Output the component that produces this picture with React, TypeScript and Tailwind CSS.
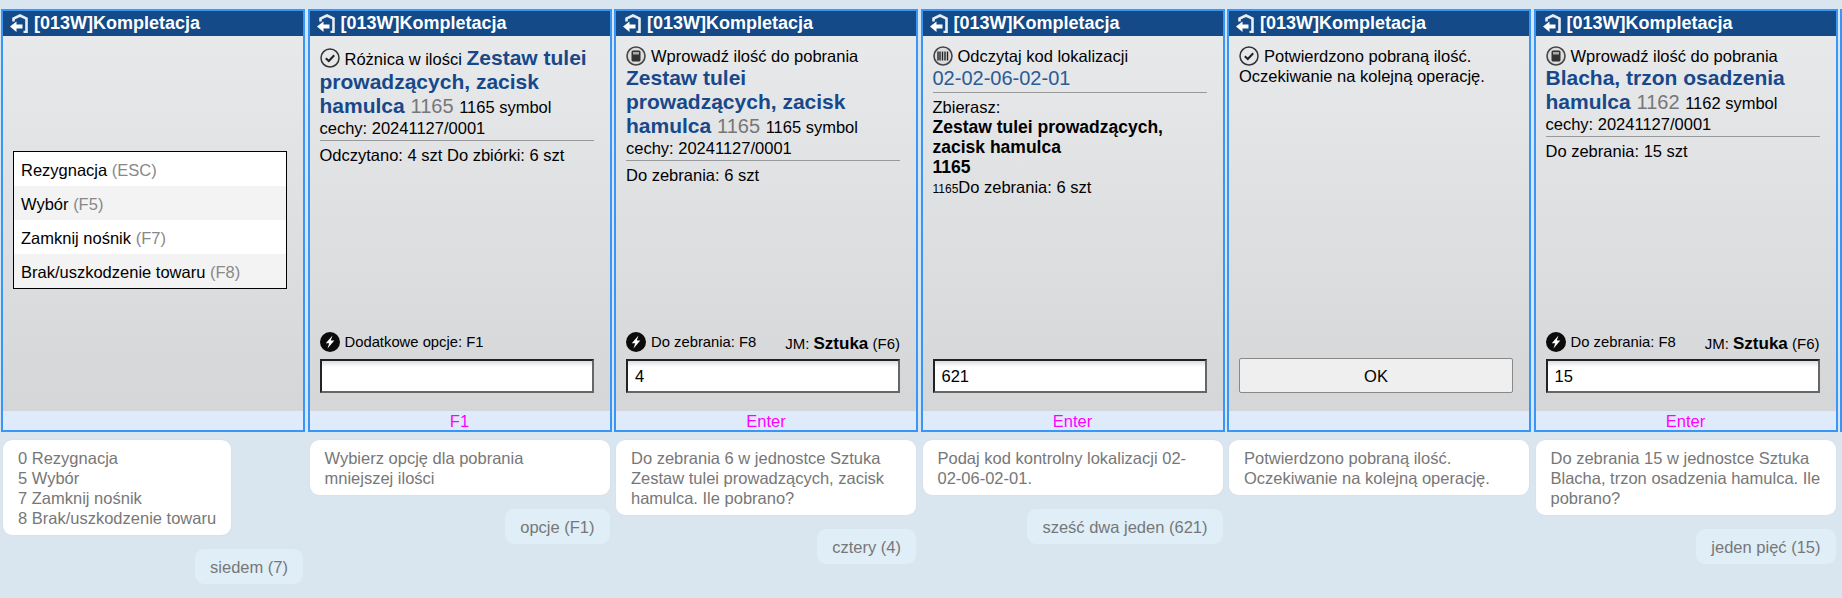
const FONT = "font-['Liberation_Sans',Arial,sans-serif]";

function BackIcon() {
  return (
    <svg width="19" height="19" viewBox="0 0 19 19" className="shrink-0">
      <path d="M3.5 7.5V4.5L10 1.5L16.5 4.5V18H13.5" fill="none" stroke="#fff" strokeWidth="2.6" opacity="0.9" />
      <path d="M0 12.5L6.5 7.5V10.5H12.5V14.5H6.5V18Z" fill="#fff" />
    </svg>
  );
}

function CheckIcon() {
  return (
    <svg width="20" height="20" viewBox="0 0 20 20" className="shrink-0">
      <circle cx="10" cy="10" r="9" fill="none" stroke="#333" strokeWidth="1.5" />
      <path d="M5.8 10.2L8.8 13L14.2 7.2" fill="none" stroke="#222" strokeWidth="2" />
    </svg>
  );
}

function CalcIcon() {
  return (
    <svg width="20" height="20" viewBox="0 0 20 20" className="shrink-0">
      <circle cx="10" cy="10" r="9" fill="#ddd" stroke="#444" strokeWidth="1.6" />
      <rect x="5.5" y="4.5" width="9" height="11" rx="1.5" fill="#333" />
      <rect x="7" y="6" width="6" height="2.5" fill="#aaa" />
    </svg>
  );
}

function BarcodeIcon() {
  return (
    <svg width="20" height="20" viewBox="0 0 20 20" className="shrink-0">
      <circle cx="10" cy="10" r="9" fill="#ddd" stroke="#444" strokeWidth="1.6" />
      <path d="M5 5.5V14.5M7 5.5V14.5M9.5 5.5V14.5M12 5.5V14.5M14.5 5.5V14.5" stroke="#222" strokeWidth="1.4" />
    </svg>
  );
}

function BoltIcon() {
  return (
    <svg width="20" height="20" viewBox="0 0 20 20" className="shrink-0">
      <circle cx="10" cy="10" r="10" fill="#0b0b0b" />
      <path d="M12.5 3.5L5.8 11.2H9.2L7.5 16.5L14.3 8.6H10.8Z" fill="#fff" />
    </svg>
  );
}

function Title({ text, code, symbol }: { text: string; code: string; symbol: string }) {
  return (
    <>
      <span className="font-bold text-[#17498a]">{text} </span>
      <span className="text-[20px] leading-none text-[#777]">{code} </span>
      <span className="text-[16.5px] leading-none">{symbol} symbol</span>
    </>
  );
}

function Hr() {
  return <div className="h-px bg-[#98999b] mt-[2px] mb-[4px]" />;
}

function Prompt({ label, unit }: { label?: string; unit?: boolean }) {
  return (
    <div className="flex items-center justify-between h-[20px] mb-[7px]">
      {label && (
        <div className="flex items-center gap-[5px] text-[14.8px]">
          <BoltIcon />
          {label}
        </div>
      )}
      {unit && (
        <div className="text-[15px] pt-[3px]">
          JM: <span className="text-[17px] font-bold">Sztuka</span> (F6)
        </div>
      )}
    </div>
  );
}

function Field({ value }: { value?: string }) {
  return (
    <div className="h-[34px] border-2 border-t-[#222] border-l-[#222] border-r-[#666] border-b-[#666] bg-linear-to-b from-[#ddd] via-white via-[20%] to-white px-[7px] leading-[31px] text-[16.5px] text-black">
      {value}
    </div>
  );
}

function Panel({ title = true, footer, children, bottom }: { title?: boolean; footer?: string; children?: React.ReactNode; bottom?: React.ReactNode }) {
  return (
    <div className="h-[423px] border-2 border-[#3a96f6] flex flex-col">
      <div className="h-[25px] shrink-0 bg-[#134a87] flex items-center pl-[7px] gap-[5px] text-white font-bold text-[18px]">
        {title && <BackIcon />}
        {title && <span>[013W]Kompletacja</span>}
      </div>
      <div className="flex-1 min-h-0 flex flex-col justify-between bg-linear-to-b from-[#e8e9eb] to-[#d5d6d8] pl-[10px] pr-[16px] pt-[10px] pb-[18px] text-[16.5px] leading-[20px] text-black">
        <div>{children}</div>
        <div>{bottom}</div>
      </div>
      <div className="h-[19px] shrink-0 bg-[#dfebfb] text-center text-[#ff00ff] text-[16.5px] leading-[21px]">{footer}</div>
    </div>
  );
}

function Bubbles({ lines, answer, wide = true }: { lines: string[]; answer?: string; wide?: boolean }) {
  return (
    <div className="mt-[8px] px-[2px] flex flex-col items-start text-[16.5px] leading-[20px] text-[#777]">
      <div className={`${wide ? 'w-[300px]' : ''} bg-white rounded-[9px] px-[15px] py-[7.5px] shadow-[0_0_1px_#ccd]`}>
        {lines.map((l) => (
          <div key={l}>{l}</div>
        ))}
      </div>
      {answer && (
        <div className="self-end mt-[14px] bg-[#dfeef7] rounded-[9px] px-[15px] py-[7.5px]">{answer}</div>
      )}
    </div>
  );
}

const MENU = [
  ['Rezygnacja', '(ESC)'],
  ['Wybór', '(F5)'],
  ['Zamknij nośnik', '(F7)'],
  ['Brak/uszkodzenie towaru', '(F8)'],
];

export default function App() {
  return (
    <div className={`${FONT} w-[1842px] h-[598px] overflow-hidden bg-[#d9e5ef] pt-[9px] pl-[1px] flex gap-[2.5px]`}>
      <div className="w-[304px] shrink-0">
        <Panel>
          <div className="mt-[105px] border border-black">
            {MENU.map(([name, key], i) => (
              <div key={name} className={`h-[34px] leading-[36px] pl-[7px] ${i % 2 ? 'bg-[#f3f3f3]' : 'bg-white'}`}>
                {name} <span className="text-[#888]">{key}</span>
              </div>
            ))}
          </div>
        </Panel>
        <Bubbles wide={false} lines={['0 Rezygnacja', '5 Wybór', '7 Zamknij nośnik', '8 Brak/uszkodzenie towaru']} answer="siedem (7)" />
      </div>

      <div className="w-[304px] shrink-0">
        <Panel
          footer="F1"
          bottom={
            <>
              <Prompt label="Dodatkowe opcje: F1" />
              <Field />
            </>
          }
        >
          <div className="text-[21px] leading-[24px]">
            <span className="inline-block align-[-3px] mr-[5px]">
              <CheckIcon />
            </span>
            <span className="text-[16.5px] leading-none">Różnica w ilości </span>
            <Title text="Zestaw tulei prowadzących, zacisk hamulca" code="1165" symbol="1165" />
          </div>
          <div>cechy: 20241127/0001</div>
          <Hr />
          <div>Odczytano: 4 szt Do zbiórki: 6 szt</div>
        </Panel>
        <Bubbles lines={['Wybierz opcję dla pobrania', 'mniejszej ilości']} answer="opcje (F1)" />
      </div>

      <div className="w-[304px] shrink-0">
        <Panel
          footer="Enter"
          bottom={
            <>
              <Prompt label="Do zebrania: F8" unit />
              <Field value="4" />
            </>
          }
        >
          <div className="flex items-center gap-[5px] h-[20px]">
            <CalcIcon />
            Wprowadź ilość do pobrania
          </div>
          <div className="text-[21px] leading-[24px]">
            <Title text="Zestaw tulei prowadzących, zacisk hamulca" code="1165" symbol="1165" />
          </div>
          <div>cechy: 20241127/0001</div>
          <Hr />
          <div>Do zebrania: 6 szt</div>
        </Panel>
        <Bubbles lines={['Do zebrania 6 w jednostce Sztuka', 'Zestaw tulei prowadzących, zacisk', 'hamulca. Ile pobrano?']} answer="cztery (4)" />
      </div>

      <div className="w-[304px] shrink-0">
        <Panel footer="Enter" bottom={<Field value="621" />}>
          <div className="flex items-center gap-[5px] h-[20px]">
            <BarcodeIcon />
            Odczytaj kod lokalizacji
          </div>
          <div className="text-[20px] leading-[24px] text-[#2a5c96]">02-02-06-02-01</div>
          <Hr />
          <div>Zbierasz:</div>
          <div className="text-[17.5px] font-bold">
            Zestaw tulei prowadzących,
            <br />
            zacisk hamulca
            <br />
            1165
          </div>
          <div>
            <span className="text-[12px]">1165</span>Do zebrania: 6 szt
          </div>
        </Panel>
        <Bubbles lines={['Podaj kod kontrolny lokalizacji 02-', '02-06-02-01.']} answer="sześć dwa jeden (621)" />
      </div>

      <div className="w-[304px] shrink-0">
        <Panel
          bottom={
            <button className="w-full h-[35px] bg-[#efefef] border border-[#888] rounded-[2px] text-[16.5px]">OK</button>
          }
        >
          <div className="flex items-center gap-[5px] h-[20px]">
            <CheckIcon />
            Potwierdzono pobraną ilość.
          </div>
          <div>Oczekiwanie na kolejną operację.</div>
        </Panel>
        <Bubbles lines={['Potwierdzono pobraną ilość.', 'Oczekiwanie na kolejną operację.']} />
      </div>

      <div className="w-[304px] shrink-0">
        <Panel
          footer="Enter"
          bottom={
            <>
              <Prompt label="Do zebrania: F8" unit />
              <Field value="15" />
            </>
          }
        >
          <div className="flex items-center gap-[5px] h-[20px]">
            <CalcIcon />
            Wprowadź ilość do pobrania
          </div>
          <div className="text-[21px] leading-[24px]">
            <Title text="Blacha, trzon osadzenia hamulca" code="1162" symbol="1162" />
          </div>
          <div>cechy: 20241127/0001</div>
          <Hr />
          <div>Do zebrania: 15 szt</div>
        </Panel>
        <Bubbles lines={['Do zebrania 15 w jednostce Sztuka', 'Blacha, trzon osadzenia hamulca. Ile', 'pobrano?']} answer="jeden pięć (15)" />
      </div>

      {/* next step peeking in at the right edge */}
      <div className="w-[304px] shrink-0">
        <Panel title={false} />
        <div className="mt-[8px] ml-[2px] h-[55px] bg-white rounded-[9px]" />
      </div>
    </div>
  );
}
